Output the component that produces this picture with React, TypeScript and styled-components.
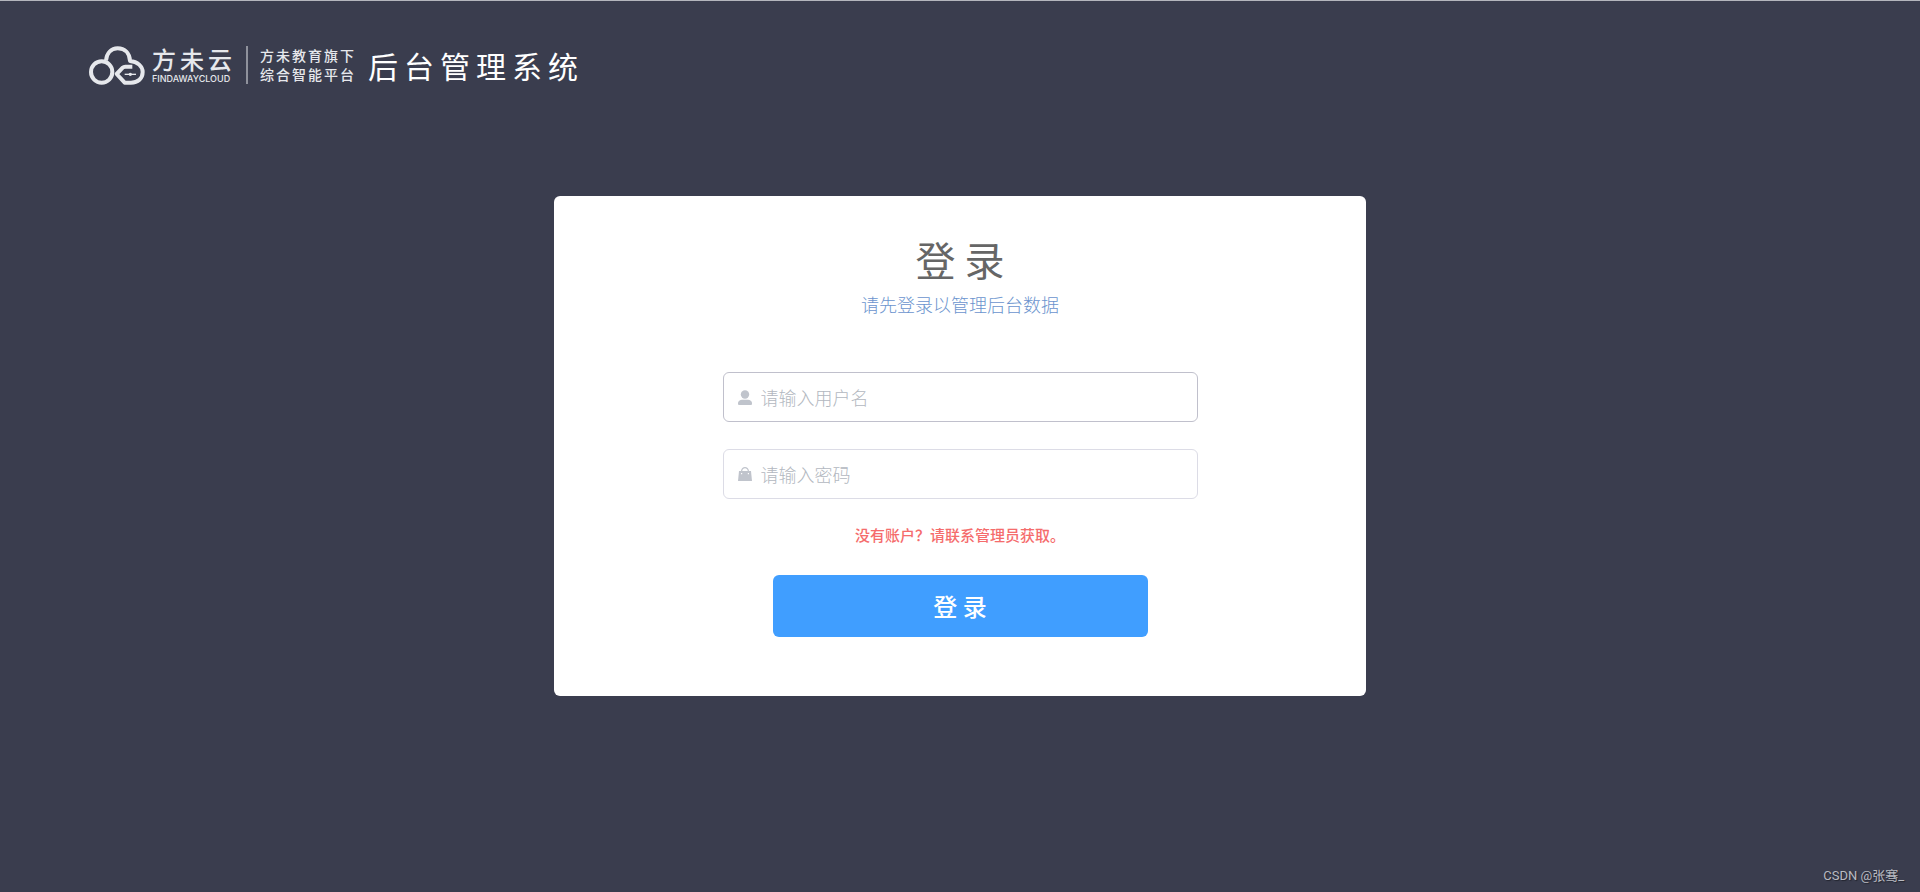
import React from "react";
import styled, { createGlobalStyle } from "styled-components";

const GlobalStyle = createGlobalStyle`
  *, *::before, *::after { box-sizing: border-box; }
  body {
    margin: 0;
    background: #3a3d4e;
    font-family: "Noto Sans CJK SC", sans-serif;
  }
`;

const Page = styled.div`
  display: flex;
  flex-direction: column;
  align-items: center;
  min-height: 100vh;
  border-top: 1px solid #b4b6bd;
`;

const Header = styled.header`
  display: flex;
  align-items: center;
  align-self: stretch;
  height: 128px;
  padding-left: 88px;
  color: #fff;
`;

const Brand = styled.a`
  display: flex;
  align-items: center;
  color: #e6e8ec;
  text-decoration: none;
`;

const CloudMark = styled.svg`
  width: 57px;
  height: 41px;
  margin-right: 7px;
`;

const Wordmark = styled.span`
  display: flex;
  flex-direction: column;
`;

const BrandName = styled.span`
  font-size: 24px;
  font-weight: 500;
  line-height: 28px;
  letter-spacing: 4px;
`;

const BrandLatin = styled.span`
  font-family: Inter, sans-serif;
  font-size: 9px;
  font-weight: 500;
  line-height: 12px;
`;

const Slogan = styled.span`
  display: flex;
  flex-direction: column;
  margin-left: 10px;
  padding-left: 12px;
  border-left: 2px solid #8f929c;
  font-size: 14px;
  font-weight: 500;
  line-height: 19px;
  letter-spacing: 2px;
`;

const SystemTitle = styled.h1`
  margin: 0 0 0 12px;
  font-size: 30px;
  font-weight: 400;
  line-height: 44px;
  letter-spacing: 6px;
`;

const Card = styled.main`
  display: flex;
  flex-direction: column;
  align-items: center;
  width: 812px;
  max-width: 100%;
  margin-top: 67px;
  padding: 34px 24px 59px;
  border-radius: 6px;
  background: #fff;
`;

const CardTitle = styled.h2`
  margin: 0;
  color: #666;
  font-size: 40px;
  font-weight: 400;
  line-height: 58px;
`;

const CardHint = styled.p`
  margin: 0;
  color: #6b94ce;
  font-size: 18px;
  font-weight: 300;
  line-height: 32px;
`;

const Form = styled.form`
  display: flex;
  flex-direction: column;
  align-items: center;
  width: 475px;
  max-width: 100%;
  margin-top: 52px;
`;

const Field = styled.label<{ $active?: boolean }>`
  display: flex;
  align-items: center;
  gap: 8px;
  width: 100%;
  height: 50px;
  margin-bottom: 27px;
  padding: 0 13px;
  border: 1px solid ${(p) => (p.$active ? "#c0c0cc" : "#dcdce6")};
  border-radius: 6px;
  color: #c0c4cc;
`;

const FieldIcon = styled.svg`
  flex: none;
  width: 16px;
  height: 16px;
`;

const TextInput = styled.input`
  flex: 1;
  min-width: 0;
  padding: 0;
  border: 0;
  outline: 0;
  background: transparent;
  color: #606266;
  font: 300 18px/26px "Noto Sans CJK SC", sans-serif;

  &::placeholder {
    color: #b2b7c0;
    opacity: 1;
  }
`;

const Notice = styled.p`
  margin: 0;
  color: #f56c6c;
  font-size: 15px;
  font-weight: 500;
  line-height: 18px;
`;

const SubmitButton = styled.button`
  width: 375px;
  max-width: 100%;
  height: 62px;
  margin-top: 31px;
  border: 0;
  border-radius: 6px;
  background: #409eff;
  color: #fff;
  font: 500 24px/36px "Noto Sans CJK SC", sans-serif;
  cursor: pointer;
`;

const Credit = styled.footer`
  align-self: flex-end;
  margin-top: auto;
  padding: 0 16px 6px;
  color: #b9bbc1;
  font: 13px/20px Roboto, "Noto Sans CJK SC", sans-serif;
  text-shadow: 1px 1px 1px #22242e;
`;

export default function App() {
  return (
    <>
      <GlobalStyle />
      <Page>
        <Header>
          <Brand href="#">
            <CloudMark viewBox="24 25 171 123" fill="none" stroke="currentColor" aria-hidden="true">
              <circle cx="65" cy="106" r="32" strokeWidth="12" />
              <path
                d="M78 72C80 49 94 35 113 35C134 35 149 49 150 73C173 75 188 89 188 106C188 125 174 138 153 138H134L110 112L128 93Q131 90 136 90H157"
                strokeWidth="12"
                strokeLinejoin="round"
              />
              <path d="M134 113H168" strokeWidth="4" />
              <circle cx="151" cy="113" r="5" fill="currentColor" stroke="none" />
            </CloudMark>
            <Wordmark>
              <BrandName>方未云</BrandName>
              <BrandLatin>FINDAWAYCLOUD</BrandLatin>
            </Wordmark>
            <Slogan>
              <span>方未教育旗下</span>
              <span>综合智能平台</span>
            </Slogan>
          </Brand>
          <SystemTitle>后台管理系统</SystemTitle>
        </Header>
        <Card>
          <CardTitle>登 录</CardTitle>
          <CardHint>请先登录以管理后台数据</CardHint>
          <Form onSubmit={(e: React.FormEvent) => e.preventDefault()}>
            <Field $active>
              <FieldIcon viewBox="0 0 16 16" fill="currentColor" aria-hidden="true">
                <circle cx="8" cy="5.500" r="4.200" />
                <path d="M1 15V14C1 12 3 10.700 5 10.700H11C13 10.700 15 12 15 14V15Q15 16 14 16H2Q1 16 1 15Z" />
              </FieldIcon>
              <TextInput type="text" placeholder="请输入用户名" aria-label="用户名" />
            </Field>
            <Field>
              <FieldIcon viewBox="0 0 16 16" fill="currentColor" aria-hidden="true">
                <path
                  fillRule="evenodd"
                  d="M2 5H4C4.300 2.500 6 1 8 1S11.700 2.500 12 5H14L15 15H1ZM5.200 5H10.800C10.500 3.200 9.400 2.200 8 2.200S5.500 3.200 5.200 5ZM4 7V8.300H5.200V7ZM10.800 7V8.300H12V7Z"
                />
              </FieldIcon>
              <TextInput type="password" placeholder="请输入密码" aria-label="密码" />
            </Field>
            <Notice>没有账户？请联系管理员获取。</Notice>
            <SubmitButton type="submit">登 录</SubmitButton>
          </Form>
        </Card>
        <Credit>CSDN @张骞_</Credit>
      </Page>
    </>
  );
}
